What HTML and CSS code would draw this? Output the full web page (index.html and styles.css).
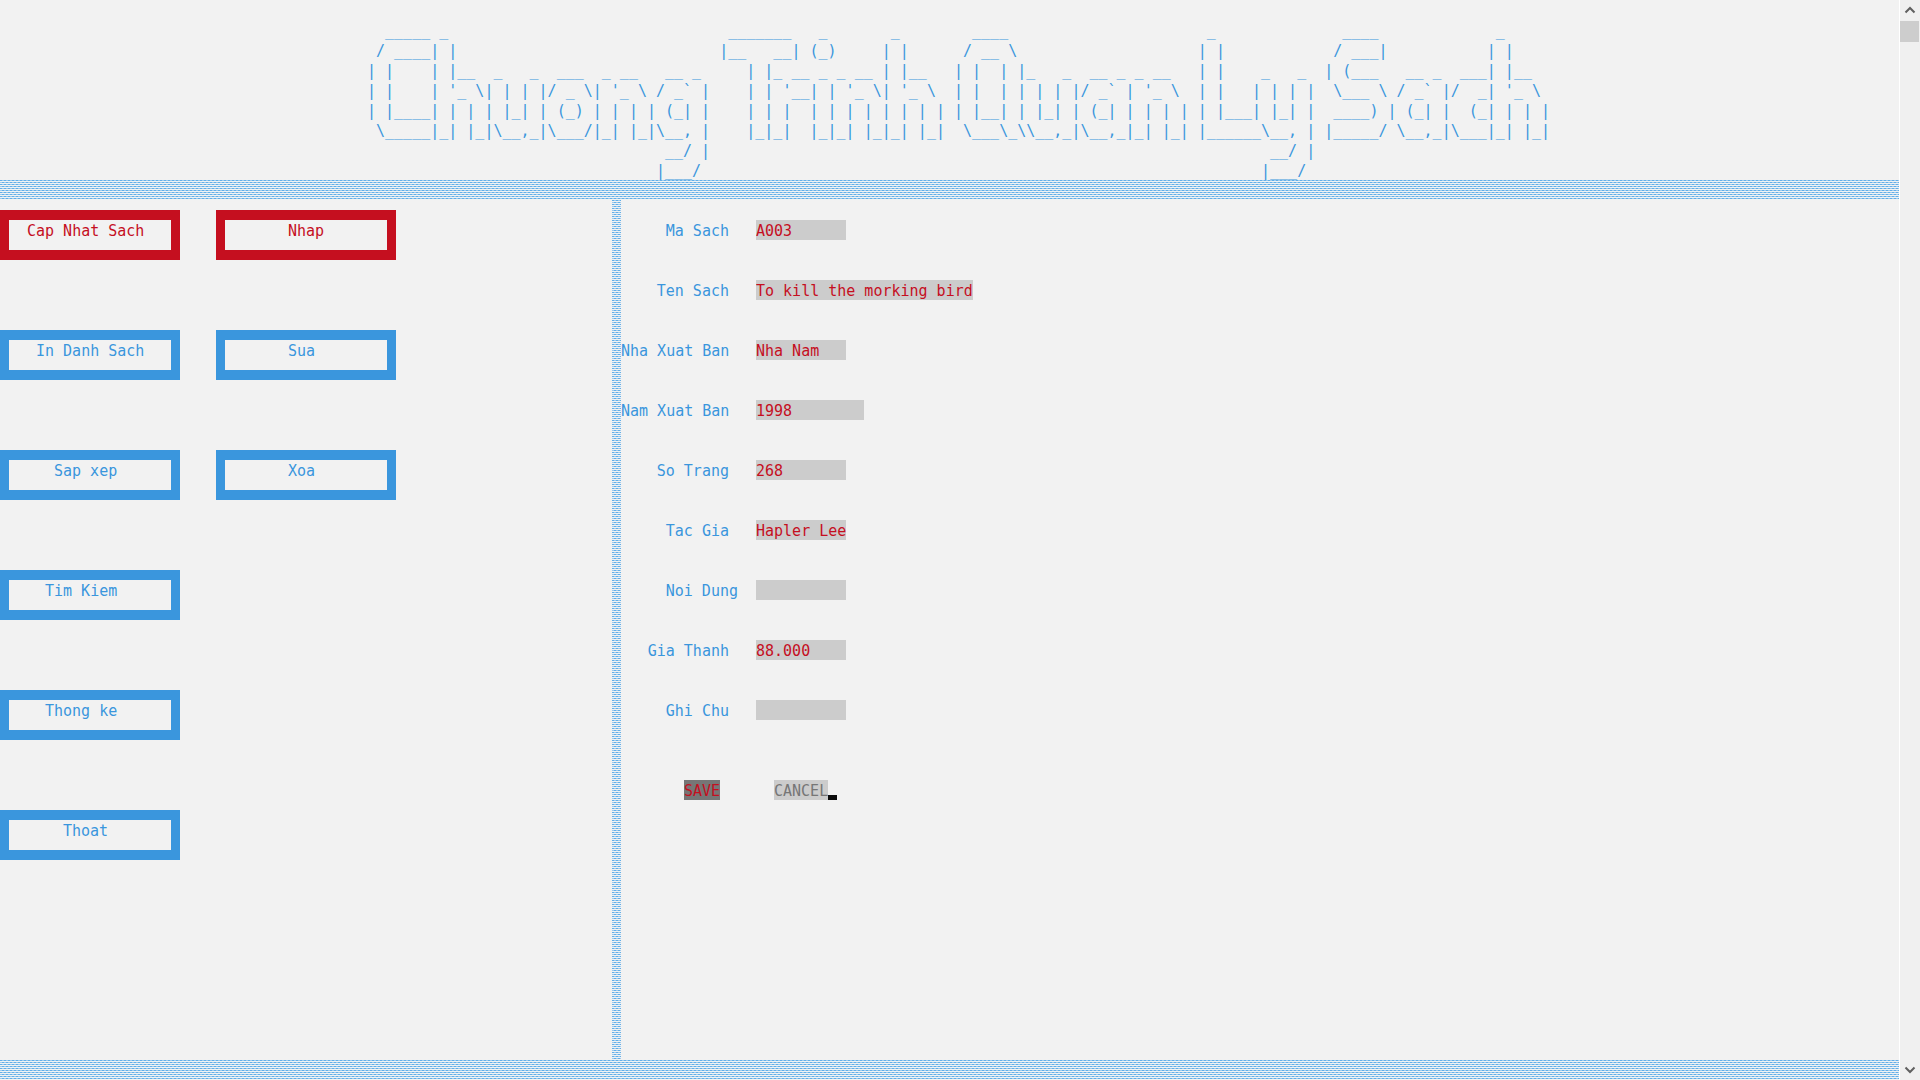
FILE: index.html
```html
<!DOCTYPE html>
<html lang="vi">
<head>
<meta charset="utf-8">
<title>Chuong Trinh Quan Ly Sach</title>
<link rel="stylesheet" href="styles.css">
</head>
<body>
<div class="console">
  <main class="screen">
    <header class="banner">
<pre class="banner-art" role="img" aria-label="Chuong Trinh Quan Ly Sach">
  _____ _                               _______   _       _        ____                      _              ____             _
 / ____| |                             |__   __| (_)     | |      / __ \                    | |            / ___|           | |
| |    | |__  _   _  ___  _ __   __ _     | |_ __ _ _ __ | |__   | |  | |_   _  __ _ _ __   | |    _   _  | (___   __ _  ___| |__
| |    | '_ \| | | |/ _ \| '_ \ / _` |    | | '__| | '_ \| '_ \  | |  | | | | |/ _` | '_ \  | |   | | | |  \___ \ / _` |/  _| '_ \
| |____| | | | |_| | (_) | | | | (_| |    | | |  | | | | | | | | | |__| | |_| | (_| | | | | | |___| |_| |  ____) | (_| |  (_| | | |
 \_____|_| |_|\__,_|\___/|_| |_|\__, |    |_|_|  |_|_| |_|_| |_|  \___\_\\__,_|\__,_|_| |_| |______\__, | |_____/ \__,_|\___|_| |_|
                                 __/ |                                                              __/ |
                                |___/                                                              |___/
</pre>
    </header>
    <div class="shade"></div>
    <div class="workspace">
      <nav class="menu">
        <div class="menu-column">
          <button type="button" class="item active indent-2">Cap Nhat Sach</button>
          <button type="button" class="item indent-3">In Danh Sach</button>
          <button type="button" class="item indent-5">Sap xep</button>
          <button type="button" class="item indent-4">Tim Kiem</button>
          <button type="button" class="item indent-4">Thong ke</button>
          <button type="button" class="item indent-6">Thoat</button>
        </div>
        <div class="menu-column">
          <button type="button" class="item active indent-7">Nhap</button>
          <button type="button" class="item indent-7">Sua</button>
          <button type="button" class="item indent-7">Xoa</button>
        </div>
      </nav>
      <div class="shade shade-vertical"></div>
      <form class="form">
        <div class="field"><label for="ma">Ma Sach</label><input id="ma" value="A003"></div>
        <div class="field"><label for="ten">Ten Sach</label><input id="ten" class="wide" value="To kill the morking bird"></div>
        <div class="field"><label for="nxb">Nha Xuat Ban</label><input id="nxb" value="Nha Nam"></div>
        <div class="field"><label for="nam">Nam Xuat Ban</label><input id="nam" class="medium" value="1998"></div>
        <div class="field"><label for="trang">So Trang</label><input id="trang" value="268"></div>
        <div class="field"><label for="tacgia">Tac Gia</label><input id="tacgia" value="Hapler Lee"></div>
        <div class="field"><label for="noidung" class="flush">Noi Dung</label><input id="noidung"></div>
        <div class="field"><label for="gia">Gia Thanh</label><input id="gia" value="88.000"></div>
        <div class="field"><label for="ghichu">Ghi Chu</label><input id="ghichu"></div>
        <div class="actions">
          <button type="button" class="save">SAVE</button>
          <button type="button" class="cancel">CANCEL</button>
          <span class="cursor"></span>
        </div>
      </form>
    </div>
    <div class="shade"></div>
  </main>
  <div class="scrollbar">
    <svg class="arrow" viewBox="0 0 20 21"><path d="M5.500 12.500L10 8L14.500 12.500"/></svg>
    <div class="thumb"></div>
    <svg class="arrow arrow-down" viewBox="0 0 20 21"><path d="M5.500 8.500L10 13L14.500 8.500"/></svg>
  </div>
</div>
</body>
</html>
```
FILE: styles.css
```css
:root {
  --blue: #3a96dd;
  --red: #c50f1f;
  --paper: #f2f2f2;
  --silver: #cccccc;
  --gray: #767676;
}

* {
  box-sizing: border-box;
}

body {
  margin: 0;
  background: var(--paper);
  color: var(--blue);
}

body,
pre,
button,
input {
  font-family: "DejaVu Sans Mono", monospace;
  font-size: 15px;
  line-height: 20px;
}

button,
input {
  margin: 0;
  padding: 0;
  border: 0;
  border-radius: 0;
}

.console {
  display: flex;
  min-height: 100vh;
}

.screen {
  flex: 1;
  min-width: 0;
  display: flex;
  flex-direction: column;
}

.banner {
  height: 180px;
  display: flex;
  justify-content: center;
  padding: 21px 0 0 18px;
}

.banner-art {
  margin: 0;
}

/* Dithered block characters: staggered dashes on every other line */
.shade {
  flex: none;
  height: 20px;
  background-image:
    repeating-linear-gradient(transparent 0 1px, var(--paper) 1px 2px),
    repeating-conic-gradient(#9ccbf0 0 25%, #62aee8 0 50%);
  background-size: auto, 4px 4px;
}

.shade-vertical {
  width: 9px;
  height: auto;
}

.workspace {
  flex: 1;
  display: flex;
}

.menu {
  width: 612px;
  padding-top: 10px;
  display: flex;
  gap: 36px;
}

.menu-column {
  display: flex;
  flex-direction: column;
  gap: 70px;
}

.item {
  width: 180px;
  height: 50px;
  padding-bottom: 8px;
  border: solid var(--blue);
  border-width: 10px 9px;
  background: transparent;
  color: var(--blue);
  text-align: left;
}

.item.active {
  border-color: var(--red);
  color: var(--red);
}

.indent-2 { text-indent: 18px; }
.indent-3 { text-indent: 27px; }
.indent-4 { text-indent: 36px; }
.indent-5 { text-indent: 45px; }
.indent-6 { text-indent: 54px; }
.indent-7 { text-indent: 63px; }

.form {
  flex: 1;
  padding-top: 20px;
  display: flex;
  flex-direction: column;
  gap: 40px;
}

.field {
  height: 20px;
  display: flex;
  gap: 18px;
}

.field label {
  width: 117px;
  padding-right: 9px;
  line-height: 22px;
  text-align: right;
  white-space: nowrap;
}

.field .flush {
  padding-right: 0;
}

.field input {
  width: 90px;
  height: 20px;
  padding-top: 2px;
  background: var(--silver);
  color: var(--red);
}

.field .medium {
  width: 108px;
}

.field .wide {
  width: 217px;
}

.actions {
  display: flex;
  padding: 20px 0 0 63px;
}

.actions button {
  height: 20px;
  line-height: 22px;
  white-space: nowrap;
}

.save {
  width: 36px;
  margin-right: 54px;
  background: var(--gray);
  color: var(--red);
}

.cancel {
  width: 54px;
  background: var(--silver);
  color: var(--gray);
}

.cursor {
  width: 9px;
  height: 5px;
  align-self: flex-end;
  background: #0c0c0c;
}

.scrollbar {
  position: sticky;
  top: 0;
  width: 21px;
  height: 100vh;
  display: flex;
  flex-direction: column;
  border-left: 1px solid #ffffff;
  background: #f0f0f0;
}

.arrow {
  width: 20px;
  height: 21px;
  fill: none;
  stroke: #606060;
  stroke-width: 2;
}

.thumb {
  width: 19px;
  height: 21px;
  background: #cdcdcd;
}

.arrow-down {
  margin-top: auto;
}
```
